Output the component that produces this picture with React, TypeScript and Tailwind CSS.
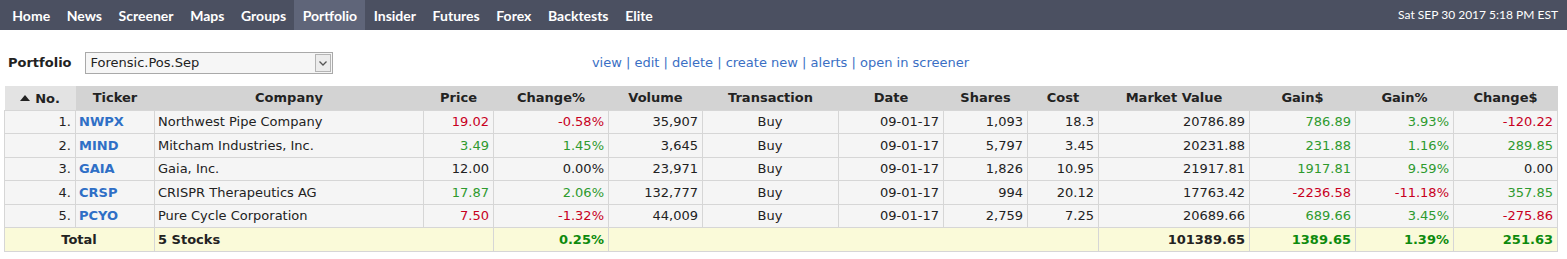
import React from 'react';

const navItems = ['Home', 'News', 'Screener', 'Maps', 'Groups', 'Portfolio', 'Insider', 'Futures', 'Forex', 'Backtests', 'Elite'];

const columns = [
  { label: 'No.', w: 71 },
  { label: 'Ticker', w: 79 },
  { label: 'Company', w: 269 },
  { label: 'Price', w: 70 },
  { label: 'Change%', w: 115 },
  { label: 'Volume', w: 94 },
  { label: 'Transaction', w: 136 },
  { label: 'Date', w: 105 },
  { label: 'Shares', w: 84 },
  { label: 'Cost', w: 71 },
  { label: 'Market Value', w: 151 },
  { label: 'Gain$', w: 106 },
  { label: 'Gain%', w: 98 },
  { label: 'Change$', w: 104 },
];

const rows = [
  { no: 1, ticker: 'NWPX', company: 'Northwest Pipe Company', price: '19.02', change: '-0.58%', volume: '35,907', shares: '1,093', cost: '18.3', mv: '20786.89', gain: '786.89', gainPct: '3.93%', changeD: '-120.22' },
  { no: 2, ticker: 'MIND', company: 'Mitcham Industries, Inc.', price: '3.49', change: '1.45%', volume: '3,645', shares: '5,797', cost: '3.45', mv: '20231.88', gain: '231.88', gainPct: '1.16%', changeD: '289.85' },
  { no: 3, ticker: 'GAIA', company: 'Gaia, Inc.', price: '12.00', change: '0.00%', volume: '23,971', shares: '1,826', cost: '10.95', mv: '21917.81', gain: '1917.81', gainPct: '9.59%', changeD: '0.00' },
  { no: 4, ticker: 'CRSP', company: 'CRISPR Therapeutics AG', price: '17.87', change: '2.06%', volume: '132,777', shares: '994', cost: '20.12', mv: '17763.42', gain: '-2236.58', gainPct: '-11.18%', changeD: '357.85' },
  { no: 5, ticker: 'PCYO', company: 'Pure Cycle Corporation', price: '7.50', change: '-1.32%', volume: '44,009', shares: '2,759', cost: '7.25', mv: '20689.66', gain: '689.66', gainPct: '3.45%', changeD: '-275.86' },
];

function tone(v: string) {
  if (v.startsWith('-')) return 'text-[#c8001e]';
  if (/^0\.00/.test(v)) return 'text-[#222]';
  return 'text-[#2e9a2e]';
}

export default function App() {
  const cell = 'border border-[#d6d6d6] pl-[3px] pr-[4px] h-[23.6px] whitespace-nowrap';
  return (
    <div className="w-[1567px] h-[259px] bg-white text-[13px] text-[#222]" style={{ fontFamily: 'Verdana, "DejaVu Sans", sans-serif' }}>
      {/* top nav */}
      <div className="h-[30px] bg-[#4b5061] flex items-stretch justify-between pl-1 pr-[9px]" style={{ fontFamily: 'Lato, sans-serif' }}>
        <div className="flex items-stretch">
          {navItems.map((n) => (
            <div
              key={n}
              className={`px-[8.3px] flex items-center text-[14px] font-bold text-white ${n === 'Portfolio' ? 'bg-[#5f6579]' : ''}`}
            >
              {n}
            </div>
          ))}
        </div>
        <div className="flex items-center text-[12px] text-white">Sat SEP 30 2017 5:18 PM EST</div>
      </div>

      {/* portfolio select + links */}
      <div className="relative h-[56px] flex items-center pl-2 pt-[10px]">
        <span className="font-bold mr-[13px]">Portfolio</span>
        <div className="w-[248px] h-[22px] border border-[#a9a9a9] bg-[#f6f6f6] flex items-center justify-between pl-[5px] pr-[1px]">
          <span>Forensic.Pos.Sep</span>
          <div className="w-[16px] h-[18px] border border-[#b4b4b4] bg-[#ececec] flex items-center justify-center">
            <svg width="8" height="5" viewBox="0 0 8 5">
              <path d="M0.5 0.5 L4 4 L7.5 0.5" stroke="#555" strokeWidth="1.3" fill="none" />
            </svg>
          </div>
        </div>
        <div className="absolute left-0 right-0 top-[10px] bottom-0 flex items-center justify-center pointer-events-none text-[#3a6fc4]">
          <span className="ml-[-6px]">view | edit | delete | create new | alerts | open in screener</span>
        </div>
      </div>

      {/* table */}
      <div className="pl-[4px]">
        <table className="table-fixed border-collapse" style={{ width: 1554 }}>
          <colgroup>
            {columns.map((c) => (
              <col key={c.label} style={{ width: c.w }} />
            ))}
          </colgroup>
          <thead>
            <tr>
              {columns.map((c, i) => (
                <th
                  key={c.label}
                  className={`h-[24px] px-[4px] font-bold text-center whitespace-nowrap border-b border-[#d6d6d6] ${i === 0 ? 'bg-[#e3e3e3]' : 'bg-[#d3d3d3]'}`}
                >
                  {i === 0 ? (
                    <span className="inline-flex items-center gap-[5px]">
                      <svg width="10" height="6" viewBox="0 0 10 6">
                        <path d="M0 6 L5 0 L10 6 Z" fill="#222" />
                      </svg>
                      No.
                    </span>
                  ) : (
                    c.label
                  )}
                </th>
              ))}
            </tr>
          </thead>
          <tbody className="bg-[#f5f5f5]">
            {rows.map((r) => (
              <tr key={r.no}>
                <td className={`${cell} text-right`}>{r.no}.</td>
                <td className={`${cell} font-bold text-[#2f6fc6]`}>{r.ticker}</td>
                <td className={cell}>{r.company}</td>
                <td className={`${cell} text-right ${tone(r.change)}`}>{r.price}</td>
                <td className={`${cell} text-right ${tone(r.change)}`}>{r.change}</td>
                <td className={`${cell} text-right`}>{r.volume}</td>
                <td className={`${cell} text-center`}>Buy</td>
                <td className={`${cell} text-right`}>09-01-17</td>
                <td className={`${cell} text-right`}>{r.shares}</td>
                <td className={`${cell} text-right`}>{r.cost}</td>
                <td className={`${cell} text-right`}>{r.mv}</td>
                <td className={`${cell} text-right ${tone(r.gain)}`}>{r.gain}</td>
                <td className={`${cell} text-right ${tone(r.gainPct)}`}>{r.gainPct}</td>
                <td className={`${cell} text-right ${tone(r.changeD)}`}>{r.changeD}</td>
              </tr>
            ))}
            <tr className="bg-[#fafad9] font-bold">
              <td colSpan={2} className={`${cell} text-center`}>Total</td>
              <td colSpan={2} className={cell}>5 Stocks</td>
              <td className={`${cell} text-right text-[#0d8a0d]`}>0.25%</td>
              <td colSpan={5} className={cell}></td>
              <td className={`${cell} text-right`}>101389.65</td>
              <td className={`${cell} text-right text-[#0d8a0d]`}>1389.65</td>
              <td className={`${cell} text-right text-[#0d8a0d]`}>1.39%</td>
              <td className={`${cell} text-right text-[#0d8a0d]`}>251.63</td>
            </tr>
          </tbody>
        </table>
      </div>
    </div>
  );
}
